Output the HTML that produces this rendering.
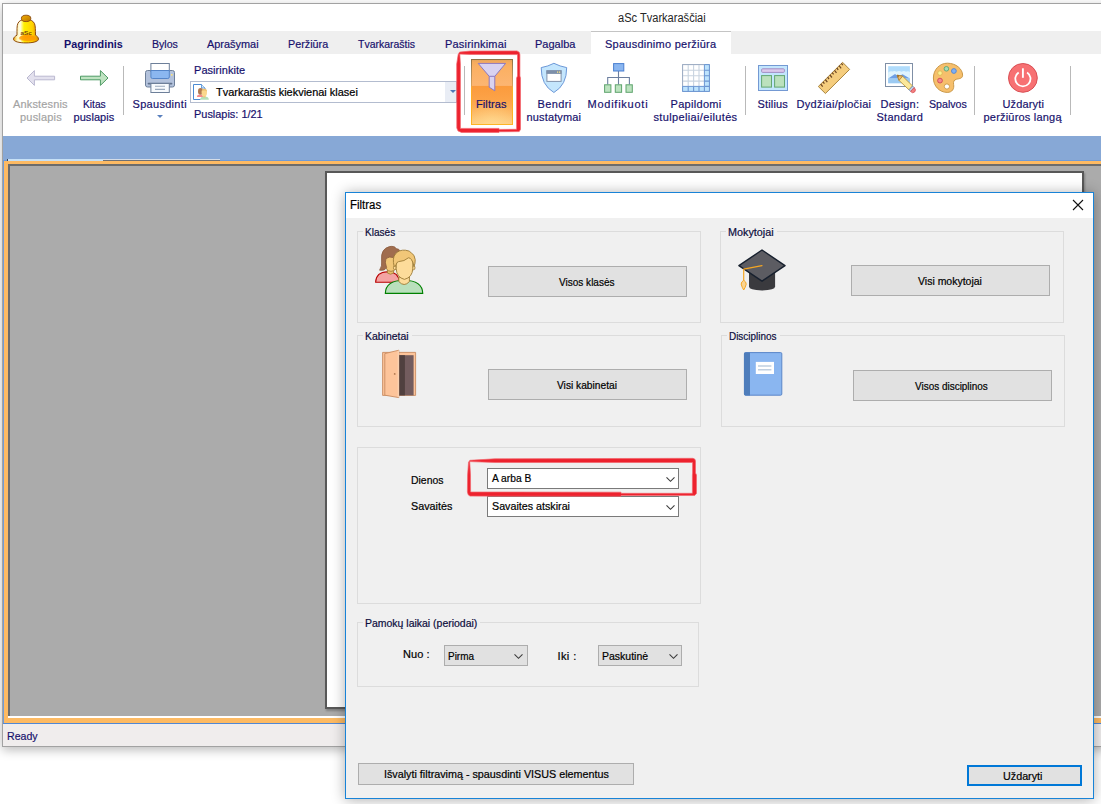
<!DOCTYPE html>
<html lang="lt">
<head>
<meta charset="utf-8">
<title>aSc Tvarkaraščiai – Filtras</title>
<style>
*{box-sizing:border-box;margin:0;padding:0}
html,body{width:1101px;height:804px;overflow:hidden;background:#fff}
body{position:relative;font-family:"Liberation Sans",sans-serif;font-size:11px;color:#000}
.a{position:absolute}
.t{position:absolute;white-space:nowrap;line-height:13px;font-size:11px;transform-origin:0 0}
.r{color:#16106c;-webkit-text-stroke:.18px #16106c}
.d{color:#000;-webkit-text-stroke:.2px currentColor}
.b{font-weight:bold;color:#16106c}
.c{transform:translateX(-50%)}
.s12{font-size:12px;line-height:14px}
svg{position:absolute;overflow:visible}
.sep{position:absolute;width:1px;top:66px;height:49px;background:#b9b9b9}
.grp{position:absolute;border:1px solid #dcdcdc}
.btn{position:absolute;border:1px solid #adadad;background:#e1e1e1}
.cmb{position:absolute;border:1px solid #7a7a7a;background:#fff}
.cmg{position:absolute;border:1px solid #adadad;background:#e1e1e1}
.lg{position:absolute;background:#f0f0f0;height:13px}
</style>
</head>
<body>
<div class="a" id="win" style="left:2px;top:3px;width:1110px;height:744px;border:1px solid #a2a2a2;background:#fff;box-shadow:0 3px 10px 0 rgba(0,0,0,.27)"></div>
<div class="a" style="left:3px;top:31px;width:1098px;height:23px;background:#efefef"></div>
<div class="a" style="left:591px;top:31px;width:140px;height:23px;background:#fff;border-top:1px solid #c4c4c4"></div>
<div class="a" style="left:3px;top:136px;width:1098px;height:25px;background:#87a8d6"></div>
<div class="a" style="left:3px;top:160px;width:1098px;height:1px;background:#6f9bd8"></div>
<div class="a" style="left:8px;top:159px;width:95px;height:2px;background:#c6e0f6"></div>
<div class="a" style="left:7px;top:159px;width:1px;height:2px;background:#3c4656"></div>
<div class="a" style="left:103px;top:159px;width:117px;height:1px;background:#d5dde8"></div>
<div class="a" style="left:103px;top:160px;width:117px;height:1px;background:#6d7076"></div>
<div class="a" style="left:3px;top:160px;width:1px;height:564px;background:#6f9bd8"></div>
<div class="a" style="left:4px;top:161px;width:1100px;height:562px;background:#fdba63"></div>
<div class="a" style="left:8px;top:164px;width:1100px;height:554px;background:#fff"></div>
<div class="a" style="left:8px;top:164px;width:1100px;height:552px;background:#ababab;border-left:2px solid #6c6c6c;border-top:2px solid #6c6c6c"></div>
<div class="a" style="left:3px;top:723px;width:1098px;height:1px;background:#4f88d6"></div>
<div class="a" style="left:3px;top:724px;width:1098px;height:22px;background:#f0eded"></div>
<div class="a" style="left:325px;top:171px;width:759px;height:538px;background:#fff;border:2px solid #585858;box-shadow:1px 2px 2px rgba(0,0,0,.25)"></div>
<div class="a" style="left:471px;top:59px;width:42px;height:66px;border-radius:2px;background:linear-gradient(#dfa35e 0,#f6ab5c 5%,#fbb062 12%,#fcb572 40%,#fb9b3d 41.5%,#fca348 62%,#fdb864 84%,#fece84 100%)"></div>
<div class="a" style="left:471px;top:59px;width:42px;height:66px;border-radius:2px;background:radial-gradient(ellipse 70% 34% at 50% 100%,rgba(255,222,150,.75),rgba(255,222,150,0) 100%)"></div>
<div class="a" style="left:471px;top:59px;width:42px;height:66px;border-radius:2px;border:1px solid transparent;border-top-color:#8e7042;border-image:linear-gradient(#8e7042 0,#b08c58 20%,#d8a058 40%,#fbab28 44%,#fdb224 90%,#fdb526 100%) 1"></div>
<span class="t d s12" id="title" style="left:618px;top:11px;transform:scaleX(0.9221);color:#262626;-webkit-text-stroke:0;">aSc Tvarkaraščiai</span>
<span class="t b" id="tab1" style="left:64px;top:38px;transform:scaleX(0.98);">Pagrindinis</span>
<span class="t r" id="tab2" style="left:152px;top:38px;transform:scaleX(0.963);">Bylos</span>
<span class="t r" id="tab3" style="left:207px;top:38px;transform:scaleX(0.9923);">Aprašymai</span>
<span class="t r" id="tab4" style="left:288px;top:38px;transform:scaleX(0.9805);">Peržiūra</span>
<span class="t r" id="tab5" style="left:358px;top:38px;transform:scaleX(0.9533);">Tvarkaraštis</span>
<span class="t r" id="tab6" style="left:445px;top:38px;letter-spacing:0.2px;">Pasirinkimai</span>
<span class="t r" id="tab7" style="left:535px;top:38px;">Pagalba</span>
<span class="t r" id="tab8" style="left:605px;top:38px;letter-spacing:0.25px;">Spausdinimo peržiūra</span>
<span class="t r" id="r1a" style="left:13px;top:98px;letter-spacing:0.15px;color:#a3a3a3;-webkit-text-stroke-color:#a3a3a3;">Ankstesnis</span>
<span class="t r" id="r1b" style="left:20px;top:111px;letter-spacing:0.2px;color:#a3a3a3;-webkit-text-stroke-color:#a3a3a3;">puslapis</span>
<span class="t r" id="r2a" style="left:83px;top:98px;transform:scaleX(0.928);">Kitas</span>
<span class="t r" id="r2b" style="left:73.5px;top:111px;letter-spacing:0.05px;">puslapis</span>
<span class="t r" id="r3" style="left:132.5px;top:98px;letter-spacing:0.3px;">Spausdinti</span>
<span class="t r" id="r4a" style="left:194px;top:64px;letter-spacing:0.05px;">Pasirinkite</span>
<span class="t r" id="r4b" style="left:194px;top:108px;transform:scaleX(0.9942);">Puslapis: 1/21</span>
<span class="t r" id="r5" style="left:476px;top:98px;letter-spacing:0.1px;">Filtras</span>
<span class="t r" id="r6a" style="left:537.5px;top:98px;letter-spacing:0.4px;">Bendri</span>
<span class="t r" id="r6b" style="left:526.5px;top:111px;letter-spacing:0.15px;">nustatymai</span>
<span class="t r" id="r7" style="left:587.5px;top:98px;letter-spacing:0.75px;">Modifikuoti</span>
<span class="t r" id="r8a" style="left:670.5px;top:98px;letter-spacing:0.3px;">Papildomi</span>
<span class="t r" id="r8b" style="left:653.5px;top:111px;letter-spacing:0.35px;">stulpeliai/eilutės</span>
<span class="t r" id="r9" style="left:757.5px;top:98px;letter-spacing:0.15px;">Stilius</span>
<span class="t r" id="r10" style="left:796.5px;top:98px;letter-spacing:0.3px;">Dydžiai/pločiai</span>
<span class="t r" id="r11a" style="left:880.5px;top:98px;letter-spacing:0.2px;">Design:</span>
<span class="t r" id="r11b" style="left:876.5px;top:111px;letter-spacing:0.25px;">Standard</span>
<span class="t r" id="r12" style="left:928.5px;top:98px;transform:scaleX(0.9667);">Spalvos</span>
<span class="t r" id="r13a" style="left:1002.5px;top:98px;letter-spacing:0.15px;">Uždaryti</span>
<span class="t r" id="r13b" style="left:983.5px;top:111px;letter-spacing:0.2px;">peržiūros langą</span>
<span class="t r" id="status" style="left:6.5px;top:730px;transform:scaleX(0.9625);">Ready</span>
<div class="sep" style="left:123px"></div>
<div class="sep" style="left:464px"></div>
<div class="sep" style="left:745px"></div>
<div class="sep" style="left:974px"></div>
<div class="sep" style="left:1070px"></div>
<div class="a" style="left:190px;top:81px;width:267px;height:22px;border:1px solid #b3bccf;background:#fff"></div>
<div class="a" style="left:445px;top:82px;width:11px;height:20px;background:#e9edf5"></div>
<svg style="left:449.5px;top:90px" width="6" height="3" viewBox="0 0 6 3"><path d="M0 0h6L3 3z" fill="#4f78b8"/></svg>
<span class="t d" id="combo" style="left:215.5px;top:86px;transform:scaleX(0.9958);color:#000;">Tvarkaraštis kiekvienai klasei</span>
<svg style="left:157px;top:115px" width="6" height="3" viewBox="0 0 6 3"><path d="M0 0h6L3 3z" fill="#5a80bd"/></svg>
<svg id="ribbon-icons" style="left:0;top:0" width="1101" height="140" viewBox="0 0 1101 140">
<defs>
<linearGradient id="bellg" x1="0" y1="0" x2="1" y2="0">
<stop offset="0" stop-color="#eaa000"/><stop offset=".14" stop-color="#fff6b8"/><stop offset=".27" stop-color="#fffde8"/><stop offset=".42" stop-color="#fff000"/><stop offset=".75" stop-color="#ffd200"/><stop offset="1" stop-color="#e08a00"/>
</linearGradient>
<linearGradient id="knobg" x1="0" y1="0" x2="1" y2="1">
<stop offset="0" stop-color="#f5b000"/><stop offset="1" stop-color="#b87400"/>
</linearGradient>
<radialGradient id="bello" cx=".55" cy=".3" r=".7">
<stop offset="0" stop-color="#ff9a00"/><stop offset=".7" stop-color="#ff9a00" stop-opacity=".85"/><stop offset="1" stop-color="#ffb000" stop-opacity="0"/>
</radialGradient>
</defs>
<!-- app bell -->
<g>
<path d="M17 35.2C17 30 16.8 26 17.8 23.6C19 20.6 22 19.4 26 19.4C30 19.4 33.2 20.6 34.5 23.6C35.5 26 35.4 30 35.5 35.2C37 36 38.5 37.4 38.5 39.2C38.5 41.5 33 42.9 26 42.9C19 42.9 13.5 41.5 13.5 39.2C13.5 37.4 15.4 36 17 35.2Z" fill="url(#bellg)" stroke="#8f4c0f" stroke-width="1"/>
<ellipse cx="27.4" cy="38.4" rx="8.6" ry="3.7" fill="url(#bello)"/>
<ellipse cx="26.1" cy="18.4" rx="4.7" ry="3.2" fill="url(#knobg)" stroke="#8a4a10" stroke-width=".9"/>
<text x="26.2" y="35.2" text-anchor="middle" font-family="Liberation Sans, sans-serif" font-size="5.8" font-weight="bold" fill="#7e3f0c" textLength="11.4" lengthAdjust="spacingAndGlyphs">aSc</text>
</g>
<!-- prev / next arrows -->
<path d="M27 78L34.4 70.6V76.2H54.6V79.8H34.4V85.4Z" fill="#e3e1ee" stroke="#bab8d0" stroke-width="1" stroke-linejoin="miter"/>
<path d="M108 78L100.4 70.6V76.2H80.5V79.8H100.4V85.4Z" fill="#bfe3c1" stroke="#4e9a64" stroke-width="1" stroke-linejoin="miter"/>
<!-- printer -->
<g stroke-width="1">
<rect x="145.5" y="70.5" width="29" height="16.5" rx="2" fill="#b3c2dc" stroke="#6d7f99"/>
<rect x="150.9" y="63.5" width="18.4" height="8" fill="#fff" stroke="#6d7f99"/>
<path d="M150.9 70.5H169.3V77Q169.3 78.5 167.8 78.5H152.4Q150.9 78.5 150.9 77Z" fill="#8bb7f0" stroke="#5585c8"/>
<rect x="171" y="74" width="1.6" height="1.6" fill="#fbe27a" stroke="none"/>
<path d="M148.5 83.6H171.5" stroke="#62738d" stroke-width="1.8" stroke-linecap="round"/>
<rect x="150.9" y="83.5" width="18.4" height="9" fill="#f7fafd" stroke="#6d7f99"/>
<path d="M155 86.2H165M155 89.4H165" stroke="#9aa9bc" stroke-width="1.1"/>
</g>
<!-- combo mini icon -->
<g>
<path d="M205 90.5V88L201.5 84.5H193.5V99.5H200.5" fill="#fff" stroke="#4a8ad4" stroke-width="1"/>
<path d="M201.5 84.5V88H205" fill="#d8ecfc" stroke="#4a8ad4" stroke-width=".8"/>
<path d="M197 97Q197 94.6 200 94.6Q203 94.6 203 97Z" fill="#f48a8a"/>
<path d="M200.2 99.8Q200.2 96.6 204.5 96.6Q208.8 96.6 208.8 99.8Z" fill="#b4e0b8"/>
<ellipse cx="200.6" cy="91.4" rx="2.6" ry="3.3" fill="#b07850"/>
<rect x="203.2" y="95" width="2.4" height="2.4" fill="#e9bf72"/><ellipse cx="204.3" cy="92.6" rx="2.7" ry="3.9" fill="#fbd78c"/>
<path d="M201.6 91.5Q202 88.8 204.5 88.8Q207 89 207 91.8Q205.5 90.4 204 90.6Q202.6 90.8 201.6 91.5Z" fill="#ecc170"/>
</g>
<!-- funnel -->
<path d="M478.2 63.4H505.6L494.8 76.3V90.8L489.2 87.2V76.3Z" fill="#d9d2f0" stroke="#8c78c0" stroke-width="1" stroke-linejoin="round"/>
<path d="M489.2 76.3H494.8" stroke="#8c78c0" stroke-width="1"/>
<!-- shield -->
<g>
<path d="M553.9 63.3Q560 66.4 566.7 67.6Q566.8 85 553.9 92.5Q541 85 541.2 67.6Q548 66.4 553.9 63.3Z" fill="#c4e6fd" stroke="#6c98d8" stroke-width="1" stroke-linejoin="round"/>
<rect x="546.9" y="70.8" width="14.2" height="10.6" fill="#fff" stroke="#8192ab" stroke-width="1"/>
<rect x="546.4" y="70.3" width="15.2" height="3.6" fill="#7d8fa9"/>
<rect x="557" y="71.4" width="1.2" height="1.5" fill="#eedd88"/><rect x="559" y="71.4" width="1.2" height="1.5" fill="#eedd88"/>
</g>
<!-- org chart -->
<g stroke-width="1">
<path d="M618.5 71V84.5M607.7 84.5V77.5H629.4V84.5" fill="none" stroke="#6d7f9f" stroke-width="1.1"/>
<rect x="613.6" y="63.6" width="10.2" height="7.4" fill="#8ab6f0" stroke="#4a7fd0"/>
<rect x="604.6" y="84.8" width="6.3" height="7.5" fill="#bce3bf" stroke="#5ea36d"/>
<rect x="615.3" y="84.8" width="6.3" height="7.5" fill="#bce3bf" stroke="#5ea36d"/>
<rect x="626" y="84.8" width="6.3" height="7.5" fill="#bce3bf" stroke="#5ea36d"/>
</g>
<!-- grid -->
<g>
<rect x="682.6" y="64.6" width="26.8" height="26.8" fill="#fff" stroke="#97a7bf" stroke-width="1"/>
<path d="M688.2 65V86M693.6 65V86M699 65V86M683 70.3H704M683 75.7H704M683 81.1H704" stroke="#c9d4e0" stroke-width="1.1" fill="none"/>
<path d="M704.4 64.6H709.4V91.4H682.6V86.4H704.4Z" fill="#bde3fd" stroke="#6b95d2" stroke-width="1"/>
<path d="M704.4 70.3H709.4M704.4 75.7H709.4M704.4 81.1H709.4M704.4 86.4H709.4M688.2 86.4V91.4M693.6 86.4V91.4M699 86.4V91.4M704.4 86.4V91.4" stroke="#6b95d2" stroke-width="1.1" fill="none"/>
</g>
<!-- style / layout -->
<g stroke-width="1">
<rect x="758.5" y="65.5" width="29" height="25" fill="#c3e6fd" stroke="#7499d3"/>
<rect x="761.6" y="68.8" width="22.8" height="3.6" rx="1" fill="#dcc8ec" stroke="#a28fc4"/>
<rect x="761.6" y="75.6" width="9.9" height="11.5" fill="#bbe1bd" stroke="#63a672"/>
<rect x="774.6" y="75.6" width="9.9" height="11.5" fill="#bbe1bd" stroke="#63a672"/>
</g>
<!-- ruler -->
<g>
<path d="M842.6 62.3L849.6 69.4L825.4 93.5L818.3 86.5Z" fill="#f5cd7e" stroke="#a9853e" stroke-width="1" stroke-linejoin="round"/>
<path d="M820.7 84.1l2.0 2.6M823.0 81.8l1.4 1.8M825.3 79.5l2.0 2.6M827.6 77.2l1.4 1.8M829.9 74.9l2.0 2.6M832.2 72.6l1.4 1.8M834.5 70.3l2.0 2.6M836.8 68.0l1.4 1.8M839.1 65.7l2.0 2.6M841.4 63.4l1.4 1.8" stroke="#6e4624" stroke-width="1.25" fill="none"/>
</g>
<!-- design: picture + pencil -->
<g>
<rect x="885.5" y="63.5" width="27" height="23" fill="#fff" stroke="#7f8fa6" stroke-width="1"/>
<rect x="888.2" y="66.2" width="21.7" height="17" fill="#b0dcfc"/>
<path d="M888.2 72.5Q890.5 70.6 892.5 71.6Q894.5 70.2 896.5 71.8Q899 70 901.5 71.8Q904 70.4 906 71.8Q908 70.8 909.9 72V78.5H888.2Z" fill="#dff4fe"/>
<path d="M888.2 78.6L895 74L898.6 76.6L902.6 74.2L909.9 78.6Z" fill="#6d9fe6"/>
<rect x="888.2" y="78.6" width="21.7" height="4.6" fill="#9ccaf2"/>
<path d="M897.2 75.2L902.6 76.2L912.6 86L909 89.8L899 80.4Z" fill="#fbe89a" stroke="#b8943c" stroke-width=".9" stroke-linejoin="round"/>
<path d="M897.2 75.2L902.6 76.2L899 80.4Z" fill="#f2bc68" stroke="#a87c32" stroke-width=".8" stroke-linejoin="round"/>
<path d="M897.2 75.2L899.3 75.6L898 77.4Z" fill="#8a6228"/>
<path d="M912.6 86L914.2 87.6L910.6 91.4L909 89.8Z" fill="#c4d4ee" stroke="#7085a5" stroke-width=".8"/>
<path d="M914.2 87.6Q916.6 90 914.6 92Q912.6 93.8 910.6 91.4Z" fill="#f47f7f" stroke="#d55358" stroke-width=".8"/>
</g>
<!-- palette -->
<g>
<path d="M947.4 63.2C955.8 63.2 962.6 68.8 962.6 75.2C962.6 78.4 959.6 78.6 956.6 79.2C953.8 79.8 953.2 82 953.6 84.4C954.4 88.6 952.4 92.4 947.2 92.4C939.4 92.4 933.4 86 933.4 78C933.4 69.8 939.4 63.2 947.4 63.2Z" fill="#f6bf6c" stroke="#c99848" stroke-width="1"/>
<circle cx="946.4" cy="68.8" r="2.3" fill="#a9dbb7" stroke="#56a676" stroke-width=".9"/>
<circle cx="953.9" cy="71" r="2.4" fill="#7fb1f3" stroke="#4f82d6" stroke-width=".9"/>
<circle cx="940" cy="73.1" r="2.3" fill="#fdf090" stroke="#d9b955" stroke-width=".9"/>
<circle cx="940" cy="80.6" r="2.4" fill="#f48a8a" stroke="#cf4657" stroke-width=".9"/>
<circle cx="946.9" cy="86.5" r="2.6" fill="#fff" stroke="#c99848" stroke-width=".9"/>
</g>
<!-- power -->
<g>
<circle cx="1022.9" cy="77.9" r="14.4" fill="#f77173" stroke="#d94f54" stroke-width="1"/>
<path d="M1018.7 72.4A7.6 7.6 0 1 0 1027.1 72.4" fill="none" stroke="#fff" stroke-width="1.8"/>
<path d="M1022.9 68.3V77.8" stroke="#fff" stroke-width="1.9"/>
</g>
</svg>
<svg id="ribbon-mark" style="left:0;top:0" width="1101" height="140" viewBox="0 0 1101 140">
<path fill="#ed222e" fill-rule="evenodd" stroke="#f2646c" stroke-width=".7" stroke-linejoin="round" d="M459.6 52.1L470 51.1L517 50.9L519.2 52.2L519.9 54.6L519.9 76L520.5 78L520.5 129.4L519.2 131.6L499 131.8L499 132.4L461.4 132.4L458 130.9L456.8 128L456.7 64L458.2 54.4ZM459.8 54.1L460.4 64L460.4 128.4L499 128.4L499 129.4L516.6 129.3L516.6 78L517.5 76L517.5 54.6L470 54.4Z"/>
</svg>
<div class="a" id="dlg" style="left:345px;top:192px;width:749px;height:607px;border:1px solid #1883d7;background:#f0f0f0;box-shadow:0 1px 13px 0 rgba(0,0,0,.32)"></div>
<div class="a" style="left:346px;top:193px;width:747px;height:25px;background:#fff"></div>
<span class="t d s12" id="dtitle" style="left:349.5px;top:198px;transform:scaleX(0.9531);">Filtras</span>
<svg style="left:1073px;top:200px" width="10" height="10" viewBox="0 0 10 10"><path d="M0 0L10 10M10 0L0 10" stroke="#111" stroke-width="1.1" fill="none"/></svg>
<div class="grp" style="left:357px;top:231px;width:344px;height:92px"></div>
<div class="lg" style="left:363px;top:225px;width:35px"></div>
<span class="t d" id="g1" style="left:365px;top:225.5px;transform:scaleX(0.9152);color:#0c0c3c;">Klasės</span>
<div class="grp" style="left:720px;top:231px;width:344px;height:92px"></div>
<div class="lg" style="left:726px;top:225px;width:51px"></div>
<span class="t d" id="g2" style="left:728px;top:225.5px;transform:scaleX(0.9809);color:#0c0c3c;">Mokytojai</span>
<div class="grp" style="left:357px;top:335px;width:344px;height:92px"></div>
<div class="lg" style="left:363px;top:329px;width:49px"></div>
<span class="t d" id="g3" style="left:365px;top:329.5px;transform:scaleX(0.95);color:#0c0c3c;">Kabinetai</span>
<div class="grp" style="left:721px;top:335px;width:344px;height:92px"></div>
<div class="lg" style="left:727px;top:329px;width:53px"></div>
<span class="t d" id="g4" style="left:729px;top:329.5px;transform:scaleX(0.9019);color:#0c0c3c;">Disciplinos</span>
<div class="grp" style="left:357px;top:447px;width:344px;height:157px"></div>
<div class="grp" style="left:357px;top:622px;width:342px;height:65px"></div>
<div class="lg" style="left:363px;top:616px;width:117px"></div>
<span class="t d" id="g6" style="left:365px;top:616.5px;transform:scaleX(0.9517);color:#0c0c3c;">Pamokų laikai (periodai)</span>
<div class="btn" style="left:488px;top:266px;width:199px;height:31px"></div>
<span class="t d" id="b1" style="left:559px;top:276px;transform:scaleX(0.9115);">Visos klasės</span>
<div class="btn" style="left:851px;top:265px;width:199px;height:31px"></div>
<span class="t d" id="b2" style="left:918px;top:275px;transform:scaleX(0.9537);">Visi mokytojai</span>
<div class="btn" style="left:488px;top:369px;width:199px;height:31px"></div>
<span class="t d" id="b3" style="left:557px;top:379px;transform:scaleX(0.9277);">Visi kabinetai</span>
<div class="btn" style="left:853px;top:370px;width:199px;height:31px"></div>
<span class="t d" id="b4" style="left:914.5px;top:380px;transform:scaleX(0.9049);">Visos disciplinos</span>
<div class="btn" style="left:358px;top:763px;width:276px;height:22px"></div>
<span class="t d" id="b5" style="left:383.5px;top:768px;transform:scaleX(0.9782);">Išvalyti filtravimą - spausdinti VISUS elementus</span>
<div class="a" style="left:967px;top:765px;width:115px;height:21px;border:2px solid #0078d7;background:#e1e1e1"></div>
<span class="t d" id="b6" style="left:1003px;top:770px;transform:scaleX(0.978);">Uždaryti</span>
<span class="t d" id="l1" style="left:411px;top:474px;transform:scaleX(0.9471);">Dienos</span>
<span class="t d" id="l2" style="left:411px;top:500px;transform:scaleX(0.981);">Savaitės</span>
<span class="t d" id="l3" style="left:403px;top:648px;letter-spacing:0.05px;">Nuo :</span>
<span class="t d" id="l4" style="left:557.5px;top:650px;letter-spacing:0.4px;">Iki :</span>
<div class="cmb" style="left:487px;top:468px;width:192px;height:21px"></div>
<div class="cmb" style="left:487px;top:496px;width:192px;height:21px"></div>
<svg style="left:665.6px;top:476.5px" width="9" height="5" viewBox="0 0 9 5"><path d="M0.5 0.3L4.5 4.3L8.5 0.3" stroke="#3c3c3c" stroke-width="1.1" fill="none"/></svg>
<svg style="left:665.6px;top:504.7px" width="9" height="5" viewBox="0 0 9 5"><path d="M0.5 0.3L4.5 4.3L8.5 0.3" stroke="#3c3c3c" stroke-width="1.1" fill="none"/></svg>
<span class="t d" id="c1" style="left:491.5px;top:472px;transform:scaleX(0.9302);">A arba B</span>
<span class="t d" id="c2" style="left:491.5px;top:500px;transform:scaleX(0.9737);">Savaites atskirai</span>
<div class="cmg" style="left:444px;top:645px;width:84px;height:21px"></div>
<div class="cmg" style="left:598px;top:645px;width:84px;height:21px"></div>
<svg style="left:514px;top:654px" width="9" height="5" viewBox="0 0 9 5"><path d="M0.5 0.3L4.5 4.3L8.5 0.3" stroke="#3c3c3c" stroke-width="1.1" fill="none"/></svg>
<svg style="left:669px;top:654px" width="9" height="5" viewBox="0 0 9 5"><path d="M0.5 0.3L4.5 4.3L8.5 0.3" stroke="#3c3c3c" stroke-width="1.1" fill="none"/></svg>
<span class="t d" id="c3" style="left:447.5px;top:650px;transform:scaleX(0.9036);">Pirma</span>
<span class="t d" id="c4" style="left:601.5px;top:650px;transform:scaleX(0.9542);">Paskutinė</span>
<svg id="dialog-icons" style="left:0;top:0" width="1101" height="804" viewBox="0 0 1101 804">
<!-- people -->
<g stroke-linejoin="round">
<path d="M375.6 282.3Q376.2 272 387.5 271.8Q398.8 272 399.4 282.3Z" fill="#f4a3a3" stroke="#b80000" stroke-width="1.1"/>
<path d="M387.4 268.5H393.6V273Q390.5 275.4 387.4 273Z" fill="#e8bb6a" stroke="#9c7a36" stroke-width=".8"/>
<path d="M384.8 259.4Q385.4 255.6 391 256Q397 256.4 397.2 262Q397.4 270.8 391 271.4Q385.2 270.8 384.8 263.4Z" fill="#f1c778" stroke="#9c7a36" stroke-width=".8"/>
<path d="M379.6 270.2Q382.4 266.4 381.6 260Q380.6 249 389.4 246.6Q394.6 245.6 396.4 248.8Q399 248.6 399.6 250.6Q394 254 393.6 257.6Q389 256 386 258.6Q384.4 262 386.6 267.6Q384.6 271 379.6 270.2Z" fill="#a06d4e" stroke="#8a5a3c" stroke-width=".8"/>
<path d="M385.3 293.4Q385.6 280.4 404 280.2Q422.4 280.4 422.8 293.4Z" fill="#b9e0bc" stroke="#008000" stroke-width="1.1"/>
<path d="M398.8 277H409.4V281.6Q404.2 287.4 398.8 281.6Z" fill="#fddc9a" stroke="#9c7a36" stroke-width=".9"/>
<ellipse cx="394.8" cy="267.8" rx="1.4" ry="2" fill="#fddc9a" stroke="#9c7a36" stroke-width=".8"/>
<ellipse cx="413.6" cy="267.8" rx="1.4" ry="2" fill="#fddc9a" stroke="#9c7a36" stroke-width=".8"/>
<path d="M396.2 262Q396.4 256 404.4 256Q412.6 256 412.8 262V268.6Q412.4 277.4 404.4 279.4Q396.6 277.4 396.2 268.6Z" fill="#fddc9a" stroke="#9c7a36" stroke-width=".9"/>
<path d="M394.2 266.6Q392 258 395.4 254Q399 249.6 405.4 250.2Q410 250.6 411.4 253Q414.6 254.4 415.2 259.6Q415.4 263.4 414 266.6Q413.4 262.4 411.4 259.6Q410 257.6 408.4 257.8Q404.4 261.4 398.6 261.6Q396.6 262 396.2 264.6Q395.6 265 394.2 266.6Z" fill="#f1c778" stroke="#9c7a36" stroke-width=".9"/>
</g>
<!-- mortarboard -->
<g stroke-linejoin="round">
<path d="M749 272V286.6Q749 290.4 762 290.4Q775.1 290.4 775.1 286.6V272Z" fill="#3a3a3e"/>
<path d="M762 250L785 265.7L762 281.2L738.9 265.7Z" fill="#5c5c62" stroke="#17202e" stroke-width="1.4"/>
<path d="M762 265.6L743.7 269.2V280.6" fill="none" stroke="#f5a623" stroke-width="1.2" stroke-linecap="round"/>
<path d="M743.7 280.2Q746.4 282 746.2 284.2Q745.4 287.4 743.7 290Q742 287.4 741.2 284.2Q741 282 743.7 280.2Z" fill="#fbd491" stroke="#f5a623" stroke-width="1"/>
</g>
<!-- door -->
<g stroke-linejoin="round">
<rect x="382.6" y="352.4" width="33" height="43" fill="#fdc49a" stroke="#c98c62" stroke-width=".9"/>
<rect x="398.9" y="355.2" width="14.7" height="40.2" fill="#735c5e"/>
<rect x="398.9" y="355.2" width="6" height="40.2" fill="#50403f"/>
<path d="M384.8 353.6L398.8 350.2V397.6L384.8 395.2Z" fill="#fdc49a" stroke="#c98c62" stroke-width=".9"/>
<path d="M398.3 350.6V397.2" stroke="#fedcc0" stroke-width="1"/>
<circle cx="394.7" cy="373.9" r=".9" fill="#b07850"/>
</g>
<!-- book -->
<g>
<rect x="744.4" y="352.6" width="37.4" height="42.6" rx="1.2" fill="#8ab6f0" stroke="#5a86c8" stroke-width="1"/>
<path d="M745.4 352.4H750V395.4H745.4Q744 395.4 744 394V353.8Q744 352.4 745.4 352.4Z" fill="#4e7dbb"/>
<rect x="755.8" y="361.9" width="18.2" height="12.1" fill="#fff"/>
<path d="M758 366H771.4M758 369.8H771.4" stroke="#c0cfe0" stroke-width="1.4"/>
</g>
<!-- red annotation around combo -->
<path fill="#ed222e" fill-rule="evenodd" stroke="#f2646c" stroke-width=".7" stroke-linejoin="round" d="M469.9 460.3L495 458.8L693 458.3L695 459.3L695.5 461.2L695.5 473L696.5 475L696.5 493.4L694.8 495.4L621 495.5L621 496.3L470 496.1L468.2 494.8L467.4 492L467.6 475L468.5 462.2ZM469.7 461.6L470.5 475L470.6 492L621 492.2L621 493.3L692.4 493.3L692.4 475L692.6 473L692.6 462.5L495 462.5Z"/>
</svg>
</body>
</html>
